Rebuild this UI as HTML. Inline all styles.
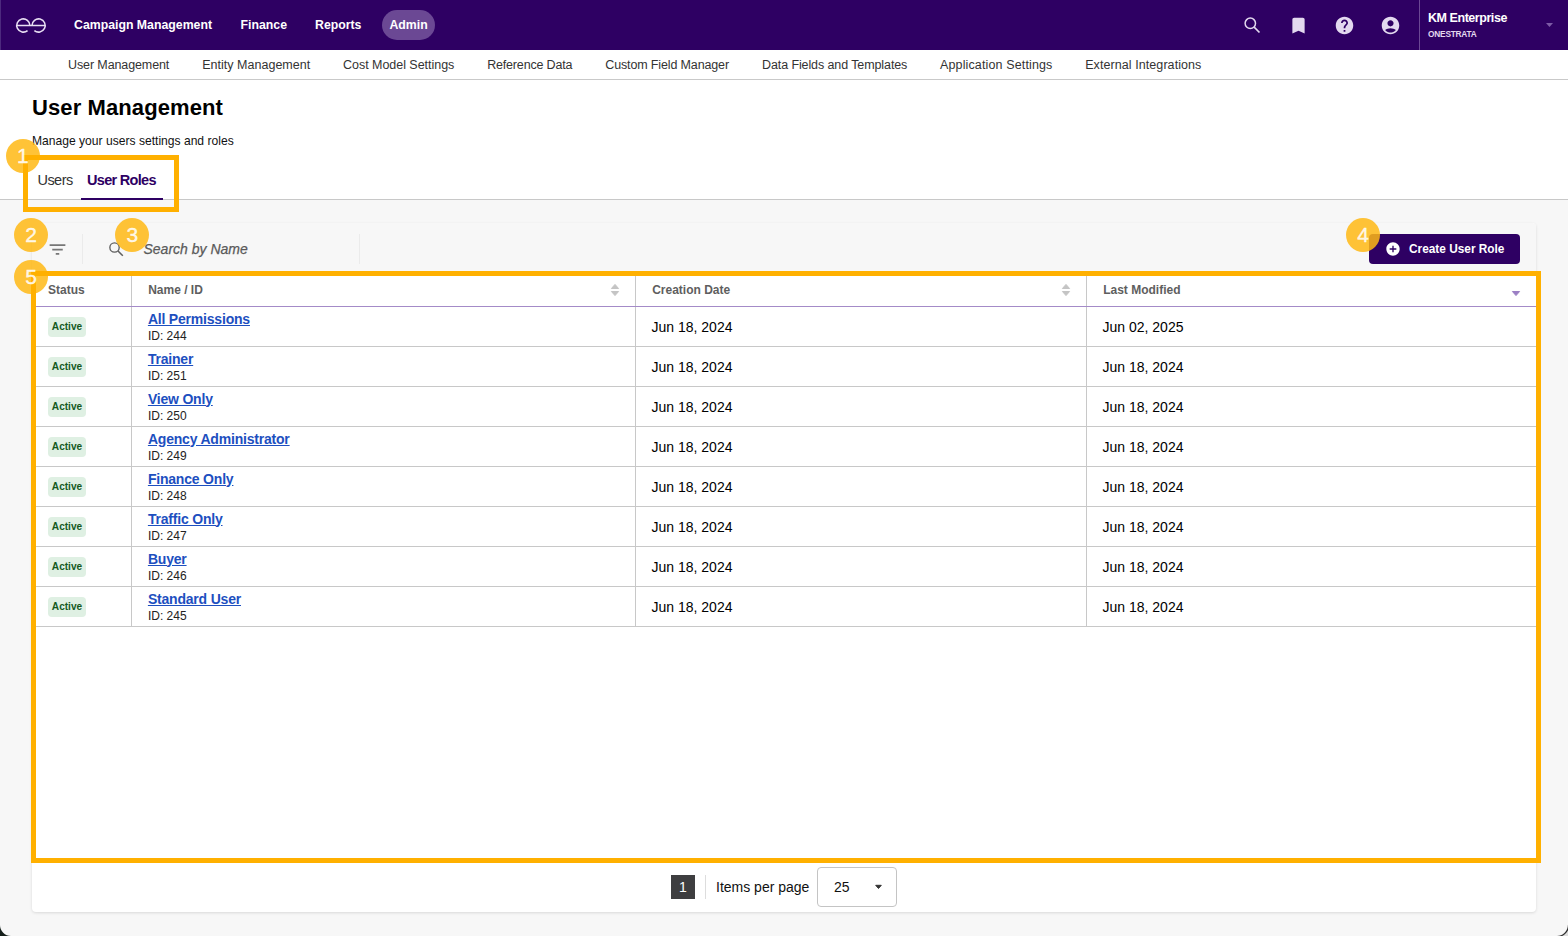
<!DOCTYPE html>
<html lang="en">
<head>
<meta charset="utf-8">
<title>User Management</title>
<style>
*{box-sizing:border-box;margin:0;padding:0}
html,body{width:1568px;height:936px;overflow:hidden;background:#f7f7f7;font-family:"Liberation Sans",sans-serif;color:#000}
body{position:relative}
.abs{position:absolute}
#topnav{left:0;top:0;width:1568px;height:50px;background:#2e0063}
#topnav .item{position:absolute;top:1px;height:49px;line-height:49px;color:#fff;font-weight:bold;font-size:12.3px;white-space:nowrap}
#admin{position:absolute;left:382px;top:10px;width:53px;height:30px;border-radius:15px;background:#6b4894}
#subnav{left:0;top:50px;width:1568px;height:30px;background:#fff;border-bottom:1px solid #c9c9c9}
#subnav span{position:absolute;top:0;line-height:31px;font-size:12.5px;color:#333;white-space:nowrap}
#head{left:0;top:80px;width:1568px;height:120px;background:#fff;border-bottom:1px solid #c8c8c8}
h1{position:absolute;left:32px;top:94.4px;font-size:22px;line-height:28px;font-weight:bold;letter-spacing:0.1px}
#sub{left:32px;top:133px;font-size:12.1px;line-height:16px;color:#111}
.tab{position:absolute;top:171px;font-size:14.5px;line-height:18px;white-space:nowrap;letter-spacing:-0.55px}
#card{left:32px;top:223px;width:1504px;height:689px;background:#fff;border-radius:4px;box-shadow:0 1px 3px rgba(0,0,0,.12)}
#toolbar{left:32px;top:223px;width:1504px;height:50px;background:#f7f7f7;border-radius:4px 4px 0 0}
.vdiv{position:absolute;width:1px;background:#ebebeb;top:234px;height:30px}
#btn{left:1369px;top:234px;width:151px;height:30px;background:#2e0063;border-radius:4px;color:#fff;font-weight:bold;font-size:11.85px;line-height:30px;padding-left:40px;white-space:nowrap}
.bdg{position:absolute;width:34px;height:34px;border-radius:50%;background:rgba(255,184,20,.85)}
.badge{position:absolute;width:34px;height:34px;color:rgba(255,255,255,.87);font-size:21px;line-height:34px;text-align:center;-webkit-text-stroke:0.4px rgba(255,255,255,.85)}
.obox{position:absolute;border:5px solid #ffb000}
table{position:absolute;left:32px;top:276px;width:1504px;border-collapse:collapse;table-layout:fixed;background:#fff}
th{height:30px;font-size:12px;font-weight:bold;color:#5e5e5e;text-align:left;padding:0 0 2px 16.700px;border-bottom:1px solid #a48bc8;border-left:1px solid #c8c8c8;position:relative}
th:first-child,td:first-child{border-left:none;padding-left:16px}
td{height:40px;font-size:14px;padding:1px 0 0 16px;border-bottom:1px solid #c8c8c8;border-left:1px solid #c8c8c8;vertical-align:middle;white-space:nowrap}
td a{color:#1d4fbf;font-weight:bold;font-size:14px;letter-spacing:-0.2px;text-decoration:underline;display:block;line-height:17px;margin-top:0.5px;margin-left:0.4px}
td small{display:block;font-size:12px;line-height:14px;color:#222;margin-top:1.5px;margin-left:0.4px}
.act{display:inline-block;background:#dff0e3;color:#145a1e;font-weight:bold;font-size:10.1px;line-height:20px;height:20px;width:38px;text-align:center;border-radius:4px;position:relative;top:0}
.sort{position:absolute;right:15px;top:7px;width:10px;height:14px}
</style>
</head>
<body>
<div id="topnav" class="abs">
  <svg class="abs" style="left:0;top:0" width="60" height="50" viewBox="0 0 60 50" fill="none" stroke="#e8def3" stroke-width="1.55"><path d="M27.54 30.56A6.6 6.6 0 1 1 29.9 25.5M34.36 30.56A6.6 6.6 0 1 0 32 25.5M16.7 25.5H45.2"/></svg>
  <div id="admin"></div>
  <span class="item" style="left:74px">Campaign Management</span>
  <span class="item" style="left:240.5px">Finance</span>
  <span class="item" style="left:315px">Reports</span>
  <span class="item" style="left:389.4px">Admin</span>
  <svg class="abs" style="left:1242px;top:15px" width="21" height="21" viewBox="0 0 24 24" fill="none" stroke="#e3d9ef"><circle cx="9.500" cy="9.500" r="5.950" stroke-width="1.700"/><path d="M13.900 13.900L20 20" stroke-width="1.900"/></svg>
  <svg class="abs" style="left:1288px;top:15px" width="21" height="21" viewBox="0 0 24 24" fill="#e3d9ef"><path d="M17 3H7c-1.100 0-2 .9-2 2v16l7-3 7 3V5c0-1.100-.9-2-2-2z"/></svg>
  <svg class="abs" style="left:1334px;top:15px" width="21" height="21" viewBox="0 0 24 24" fill="#e3d9ef"><path d="M12 2C6.480 2 2 6.480 2 12s4.480 10 10 10 10-4.480 10-10S17.520 2 12 2zm1 17h-2v-2h2v2zm2.070-7.750l-.9.920C13.450 12.900 13 13.500 13 15h-2v-.5c0-1.100.45-2.100 1.170-2.830l1.240-1.260c.37-.36.590-.86.590-1.410 0-1.100-.9-2-2-2s-2 .9-2 2H8c0-2.210 1.790-4 4-4s4 1.790 4 4c0 .88-.36 1.680-.93 2.250z"/></svg>
  <svg class="abs" style="left:1380px;top:15px" width="21" height="21" viewBox="0 0 24 24" fill="#e3d9ef"><path d="M12 2C6.480 2 2 6.480 2 12s4.480 10 10 10 10-4.480 10-10S17.520 2 12 2zm0 4c1.930 0 3.500 1.570 3.500 3.500S13.930 13 12 13s-3.500-1.570-3.500-3.500S10.070 6 12 6zm0 14c-2.030 0-4.430-.82-6.140-2.880C7.550 15.800 9.680 15 12 15s4.450.8 6.140 2.120C16.430 19.180 14.030 20 12 20z"/></svg>
  <div class="abs" style="left:1419px;top:0;width:1px;height:50px;background:#6b4894"></div>
  <span class="abs" style="left:1428px;top:11px;color:#fff;font-weight:bold;letter-spacing:-0.45px;font-size:12.5px;line-height:15px;white-space:nowrap">KM Enterprise</span>
  <span class="abs" style="left:1428px;top:29px;color:#e3d9ef;font-weight:bold;letter-spacing:-0.2px;font-size:8.3px;line-height:11px;white-space:nowrap">ONESTRATA</span>
  <svg class="abs" style="left:1546px;top:23px" width="7" height="4" viewBox="0 0 7 4" fill="#7d5ba6"><path d="M0 0h7L3.500 4z"/></svg>
</div>
<div id="subnav" class="abs">
  <span style="left:68px;letter-spacing:-0.107px">User Management</span>
  <span style="left:202.2px;letter-spacing:0.02px">Entity Management</span>
  <span style="left:343px;letter-spacing:-0.03px">Cost Model Settings</span>
  <span style="left:487.2px;letter-spacing:-0.18px">Reference Data</span>
  <span style="left:605.3px;letter-spacing:-0.14px">Custom Field Manager</span>
  <span style="left:762px;letter-spacing:-0.1px">Data Fields and Templates</span>
  <span style="left:940px;letter-spacing:0.135px">Application Settings</span>
  <span style="left:1085.2px;letter-spacing:0.076px">External Integrations</span>
</div>
<div id="head" class="abs"></div>
<h1>User Management</h1>
<div id="sub" class="abs">Manage your users settings and roles</div>
<span class="tab" style="left:37.5px;color:#333">Users</span>
<span class="tab" style="left:87px;color:#2e0063;font-weight:bold;letter-spacing:-0.7px">User Roles</span>
<div class="abs" style="left:81px;top:198px;width:82px;height:2px;background:#2e0063"></div>

<div id="card" class="abs"></div>
<div id="toolbar" class="abs"></div>
<div class="vdiv" style="left:82px"></div>
<div class="vdiv" style="left:359px"></div>
<svg class="abs" style="left:47.3px;top:239px" width="21" height="21" viewBox="0 0 24 24" fill="#777"><path d="M10 18h4v-2h-4v2zM3 6v2h18V6H3zm3 7h12v-2H6v2z"/></svg>
<svg class="abs" style="left:107.4px;top:239.700px" width="19" height="19" viewBox="0 0 24 24" fill="none" stroke="#5f5f5f"><circle cx="9.500" cy="9.500" r="5.900" stroke-width="1.700"/><path d="M13.900 13.900L20 20" stroke-width="1.900"/></svg>
<span class="abs" style="left:143.5px;top:240px;font-size:14px;line-height:18px;font-style:italic;color:#5a5a5a;-webkit-text-stroke:0.25px #5a5a5a;white-space:nowrap">Search by Name</span>
<div id="btn" class="abs">Create User Role</div>
<svg class="abs" style="left:1385px;top:241px" width="16" height="16" viewBox="0 0 24 24" fill="#fff"><path d="M12 2C6.480 2 2 6.480 2 12s4.480 10 10 10 10-4.480 10-10S17.520 2 12 2zm5 11h-4v4h-2v-4H7v-2h4V7h2v4h4v2z"/></svg>

<table>
<colgroup><col style="width:99px"><col style="width:504px"><col style="width:451px"><col></colgroup>
<tr><th>Status</th><th>Name / ID<svg class="sort" viewBox="0 0 10 14"><path d="M1.400 5.500L5 1.400l3.600 4.100zM1.400 8.500L5 12.600 8.600 8.500z" fill="#c4c4c4" stroke="#c4c4c4" stroke-width="1" stroke-linejoin="round"/></svg></th><th>Creation Date<svg class="sort" viewBox="0 0 10 14"><path d="M1.400 5.500L5 1.400l3.600 4.100zM1.400 8.500L5 12.600 8.600 8.500z" fill="#c4c4c4" stroke="#c4c4c4" stroke-width="1" stroke-linejoin="round"/></svg></th><th>Last Modified<svg class="sort" viewBox="0 0 10 14"><path d="M1.400 8.500L5 12.600 8.600 8.500z" fill="#9b7fc4" stroke="#9b7fc4" stroke-width="1" stroke-linejoin="round"/></svg></th></tr>
<tr><td><span class="act">Active</span></td><td><a>All Permissions</a><small>ID: 244</small></td><td>Jun 18, 2024</td><td>Jun 02, 2025</td></tr>
<tr><td><span class="act">Active</span></td><td><a>Trainer</a><small>ID: 251</small></td><td>Jun 18, 2024</td><td>Jun 18, 2024</td></tr>
<tr><td><span class="act">Active</span></td><td><a>View Only</a><small>ID: 250</small></td><td>Jun 18, 2024</td><td>Jun 18, 2024</td></tr>
<tr><td><span class="act">Active</span></td><td><a>Agency Administrator</a><small>ID: 249</small></td><td>Jun 18, 2024</td><td>Jun 18, 2024</td></tr>
<tr><td><span class="act">Active</span></td><td><a>Finance Only</a><small>ID: 248</small></td><td>Jun 18, 2024</td><td>Jun 18, 2024</td></tr>
<tr><td><span class="act">Active</span></td><td><a>Traffic Only</a><small>ID: 247</small></td><td>Jun 18, 2024</td><td>Jun 18, 2024</td></tr>
<tr><td><span class="act">Active</span></td><td><a>Buyer</a><small>ID: 246</small></td><td>Jun 18, 2024</td><td>Jun 18, 2024</td></tr>
<tr><td><span class="act">Active</span></td><td><a>Standard User</a><small>ID: 245</small></td><td>Jun 18, 2024</td><td>Jun 18, 2024</td></tr>
</table>

<div class="abs" style="left:671px;top:875px;width:24px;height:24px;background:#3e3e40;color:#fff;font-size:14px;line-height:24px;text-align:center">1</div>
<div class="abs" style="left:705px;top:875px;width:1px;height:24px;background:#ddd"></div>
<span class="abs" style="left:716px;top:878px;font-size:14px;line-height:18px;color:#111;white-space:nowrap">Items per page</span>
<div class="abs" style="left:817px;top:867px;width:80px;height:40px;border:1px solid #c4c4c4;border-radius:4px;background:#fff"></div>
<span class="abs" style="left:834px;top:878px;font-size:14px;line-height:18px;color:#111">25</span>
<svg class="abs" style="left:874px;top:884px" width="9" height="6" viewBox="0 0 9 6" fill="#333" stroke="#333" stroke-width="1" stroke-linejoin="round"><path d="M1.700 1.300h5.600L4.500 4.500z"/></svg>

<div class="bdg" style="left:6.300px;top:138.600px"></div>
<div class="bdg" style="left:14px;top:218.400px"></div>
<div class="bdg" style="left:115.300px;top:218.400px"></div>
<div class="bdg" style="left:1346px;top:218px"></div>
<div class="bdg" style="left:14px;top:259.800px"></div>
<div class="obox" style="left:23px;top:155px;width:156px;height:56.500px"></div>
<div class="obox" style="left:31px;top:271px;width:1510px;height:592px"></div>
<div class="badge" style="left:5.800px;top:138.600px">1</div>
<div class="badge" style="left:14px;top:218.4px">2</div>
<div class="badge" style="left:115.3px;top:218.4px">3</div>
<div class="badge" style="left:1346px;top:218px">4</div>
<div class="badge" style="left:14px;top:259.8px">5</div>
<svg class="abs" style="left:0;top:925px" width="11" height="11" viewBox="0 0 11 11"><path d="M0 0v11h11A11 11 0 0 1 0 0z" fill="#141f1a"/></svg>
<svg class="abs" style="left:1556px;top:924px" width="12" height="12" viewBox="0 0 12 12"><path d="M12 0v12H0A12 12 0 0 0 12 0z" fill="#dcdcdc"/><path d="M1 12.500A11.500 11.500 0 0 0 12.500 1" fill="none" stroke="#2a2a2a" stroke-width="1.200"/></svg>
<div class="abs" style="left:0;top:0;width:1px;height:50px;background:#5a3b8a;opacity:.7"></div>
</body>
</html>
